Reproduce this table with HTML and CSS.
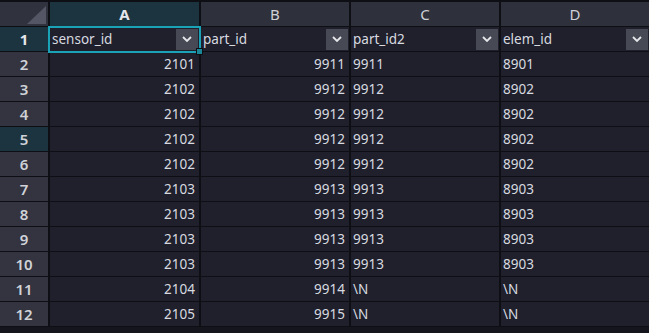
FILE: index.html
```html
<!DOCTYPE html>
<html>
<head>
<meta charset="utf-8">
<link rel="stylesheet" href="styles.css">
</head>
<body>
<div class="sheet">
  <div class="corner"><div class="tri"></div></div>
  <div class="colhead active">A</div>
  <div class="colhead">B</div>
  <div class="colhead">C</div>
  <div class="colhead">D</div>

  <div class="rowhead active">1</div>
  <div class="cell filter selected"><span>sensor_id</span><span class="dd"><svg width="10" height="6" viewBox="0 0 10 6"><path d="M1 1 L5 5 L9 1" fill="none" stroke="#e6e7ea" stroke-width="1.8"/></svg></span><i class="handle"></i></div>
  <div class="cell filter"><span>part_id</span><span class="dd"><svg width="10" height="6" viewBox="0 0 10 6"><path d="M1 1 L5 5 L9 1" fill="none" stroke="#e6e7ea" stroke-width="1.8"/></svg></span></div>
  <div class="cell filter"><span>part_id2</span><span class="dd"><svg width="10" height="6" viewBox="0 0 10 6"><path d="M1 1 L5 5 L9 1" fill="none" stroke="#e6e7ea" stroke-width="1.8"/></svg></span></div>
  <div class="cell filter"><span>elem_id</span><span class="dd"><svg width="10" height="6" viewBox="0 0 10 6"><path d="M1 1 L5 5 L9 1" fill="none" stroke="#e6e7ea" stroke-width="1.8"/></svg></span></div>

  <div class="rowhead">2</div><div class="cell num">2101</div><div class="cell num">9911</div><div class="cell">9911</div><div class="cell">8901</div>
  <div class="rowhead">3</div><div class="cell num">2102</div><div class="cell num">9912</div><div class="cell">9912</div><div class="cell">8902</div>
  <div class="rowhead">4</div><div class="cell num">2102</div><div class="cell num">9912</div><div class="cell">9912</div><div class="cell">8902</div>
  <div class="rowhead hover">5</div><div class="cell num">2102</div><div class="cell num">9912</div><div class="cell">9912</div><div class="cell">8902</div>
  <div class="rowhead">6</div><div class="cell num">2102</div><div class="cell num">9912</div><div class="cell">9912</div><div class="cell">8902</div>
  <div class="rowhead">7</div><div class="cell num">2103</div><div class="cell num">9913</div><div class="cell">9913</div><div class="cell">8903</div>
  <div class="rowhead">8</div><div class="cell num">2103</div><div class="cell num">9913</div><div class="cell">9913</div><div class="cell">8903</div>
  <div class="rowhead">9</div><div class="cell num">2103</div><div class="cell num">9913</div><div class="cell">9913</div><div class="cell">8903</div>
  <div class="rowhead">10</div><div class="cell num">2103</div><div class="cell num">9913</div><div class="cell">9913</div><div class="cell">8903</div>
  <div class="rowhead">11</div><div class="cell num">2104</div><div class="cell num">9914</div><div class="cell">\N</div><div class="cell">\N</div>
  <div class="rowhead">12</div><div class="cell num">2105</div><div class="cell num">9915</div><div class="cell">\N</div><div class="cell">\N</div>
</div>
</body>
</html>
```
FILE: styles.css
```css
html, body {
  margin: 0;
  padding: 0;
  background: #15161d;
  width: 649px;
  height: 333px;
  overflow: hidden;
}
.sheet {
  display: grid;
  grid-template-columns: 48px 149px 148px 148px 148px;
  grid-template-rows: 24px repeat(12, 24px);
  gap: 1px 2px;
  padding-top: 2px;
  background: #0e0f15;
  font-family: "Noto Sans", "Open Sans", sans-serif;
  font-size: 13.5px;
  color: #d8dae0;
  padding-bottom: 1px;
}
.corner {
  background: #30323d;
  position: relative;
}
.tri {
  position: absolute;
  right: 2px;
  bottom: 2px;
  width: 0;
  height: 0;
  border-left: 19px solid transparent;
  border-bottom: 18px solid #545665;
}
.colhead {
  background: #2e303b;
  display: flex;
  align-items: center;
  justify-content: center;
  font-size: 15px;
  color: #cfd1d8;
}
.colhead.active {
  background: #1b3440;
  font-weight: bold;
  color: #e4e6ea;
}
.rowhead {
  background: #33343f;
  display: flex;
  align-items: center;
  justify-content: center;
  font-size: 15px;
  font-weight: 600;
  color: #d0d2d8;
}
.rowhead.active {
  background: #1b3440;
  font-weight: bold;
  color: #e6e8ec;
}
.rowhead.hover {
  background: #1b3440;
}
.cell {
  background: #1f202b;
  display: flex;
  align-items: center;
  padding: 0 3px 0 2px;
  white-space: nowrap;
  overflow: hidden;
}
.cell.num {
  justify-content: flex-end;
  padding-right: 4px;
}
.cell.filter {
  justify-content: space-between;
  padding-right: 1px;
  overflow: visible;
  position: relative;
}
.dd {
  width: 22px;
  height: 21px;
  background: #474954;
  display: flex;
  align-items: center;
  justify-content: center;
}
.selected::after {
  content: "";
  position: absolute;
  left: -2px;
  top: -1px;
  right: -2px;
  bottom: -2px;
  border: 2px solid #1aa2b6;
  pointer-events: none;
}
.handle {
  position: absolute;
  right: -4px;
  bottom: -4px;
  width: 5px;
  height: 5px;
  background: #1a8799;
  border: 1px solid #0e0f15;
  z-index: 2;
}
```
